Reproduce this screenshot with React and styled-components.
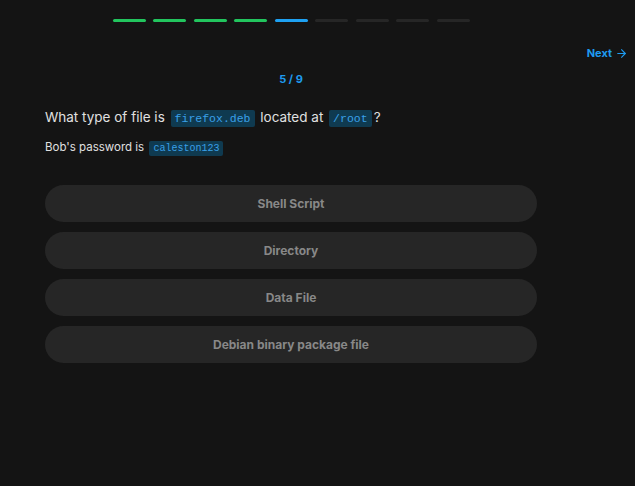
import React from "react";
import styled, { createGlobalStyle } from "styled-components";
import { ArrowRight } from "lucide-react";

const GlobalStyle = createGlobalStyle`
  html, body {
    margin: 0;
    padding: 0;
    background: #141414;
  }
  body {
    font-family: Inter, "Noto Sans", sans-serif;
    color: #e4e4e4;
  }
`;

const Page = styled.div`
  width: 635px;
  height: 486px;
  box-sizing: border-box;
  padding: 19px 7px 0 45px;
  display: flex;
  flex-direction: column;
`;

const Column = styled.div`
  width: 492px;
`;

const Progress = styled.div`
  display: flex;
  justify-content: center;
  gap: 7.5px;
`;

const Segment = styled.div`
  width: 33px;
  height: 3px;
  border-radius: 2px;
  background: ${({ state }) =>
    state === "done" ? "#22c55e" : state === "current" ? "#1ea1f2" : "#262626"};
`;

const NextRow = styled.div`
  display: flex;
  justify-content: flex-end;
  margin-top: 24px;
`;

const NextButton = styled.button`
  display: flex;
  align-items: center;
  gap: 3px;
  background: none;
  border: none;
  padding: 0;
  font-family: inherit;
  font-size: 11px;
  font-weight: 700;
  color: #1e9bf0;
  cursor: pointer;
`;

const Counter = styled.div`
  text-align: center;
  font-size: 11px;
  font-weight: 700;
  color: #1e9bf0;
  margin-top: 12px;
`;

const Question = styled.p`
  margin: 21px 0 0;
  font-size: 13.5px;
  line-height: 20px;
  color: #e0e0e0;
`;

const Hint = styled.p`
  margin: 10px 0 0;
  font-size: 11.5px;
  line-height: 16px;
  color: #e0e0e0;
`;

const Code = styled.code`
  font-family: "Liberation Mono", "DejaVu Sans Mono", monospace;
  font-size: ${({ small }) => (small ? "10px" : "11.5px")};
  color: #3aa0e8;
  background: #0f3a50;
  border-radius: 2px;
  padding: 2px 4px;
  margin: 0 2px;
`;

const Options = styled.div`
  display: flex;
  flex-direction: column;
  gap: 10px;
  margin-top: 28px;
`;

const Option = styled.button`
  height: 37px;
  border: none;
  border-radius: 19px;
  background: #262626;
  color: #888888;
  font-family: inherit;
  font-size: 12px;
  font-weight: 700;
  cursor: pointer;
`;

const steps = ["done", "done", "done", "done", "current", "todo", "todo", "todo", "todo"];
const answers = ["Shell Script", "Directory", "Data File", "Debian binary package file"];

export default function App() {
  return (
    <>
      <GlobalStyle />
      <Page>
        <Column>
          <Progress>
            {steps.map((s, i) => (
              <Segment key={i} state={s} />
            ))}
          </Progress>
        </Column>
        <NextRow>
          <NextButton>
            Next <ArrowRight size={13} strokeWidth={2} />
          </NextButton>
        </NextRow>
        <Column>
          <Counter>5 / 9</Counter>
          <Question>
            What type of file is <Code>firefox.deb</Code> located at <Code>/root</Code>?
          </Question>
          <Hint>
            Bob's password is <Code small>caleston123</Code>
          </Hint>
          <Options>
            {answers.map((a) => (
              <Option key={a}>{a}</Option>
            ))}
          </Options>
        </Column>
      </Page>
    </>
  );
}
